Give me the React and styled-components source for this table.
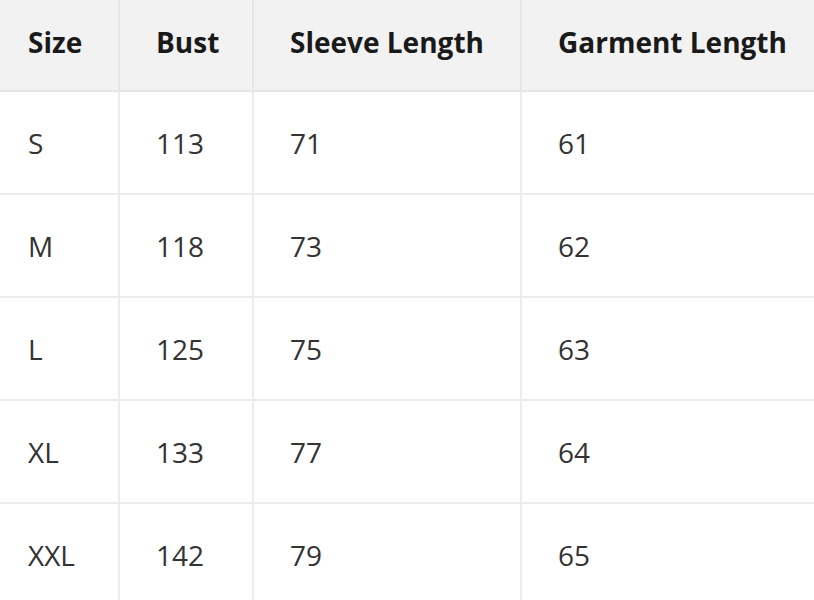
import React from "react";
import styled, { createGlobalStyle } from "styled-components";

const GlobalStyle = createGlobalStyle`
  html, body {
    margin: 0;
    padding: 0;
    background: #ffffff;
    overflow: hidden;
  }
`;

const Wrapper = styled.div`
  width: 814px;
  height: 600px;
  overflow: hidden;
`;

const Table = styled.table`
  border-collapse: collapse;
  table-layout: fixed;
  width: 1000px;
  font-family: "Open Sans", "Noto Sans", sans-serif;
  font-size: 28px;
  color: #333333;
`;

const Col = styled.col`
  width: ${(p) => p.$width}px;
`;

const HeadCell = styled.th`
  height: 84px;
  padding: 0 0 6px ${(p) => (p.$first ? "28px" : "36px")};
  background: #f2f2f2;
  color: #1a1a1a;
  font-weight: 700;
  text-align: left;
  border-right: 2px solid #e6e6e6;
  border-bottom: 2px solid #e6e6e6;
  white-space: nowrap;
`;

const Cell = styled.td`
  height: 101px;
  padding: 0 0 0 ${(p) => (p.$first ? "28px" : "36px")};
  text-align: left;
  border-right: 2px solid #ececec;
  border-bottom: 2px solid #ececec;
  white-space: nowrap;
`;

const widths = [119, 134, 268, 479];
const columns = ["Size", "Bust", "Sleeve Length", "Garment Length"];

const rows = [
  ["S", 113, 71, 61],
  ["M", 118, 73, 62],
  ["L", 125, 75, 63],
  ["XL", 133, 77, 64],
  ["XXL", 142, 79, 65],
];

function App() {
  return (
    <Wrapper>
      <GlobalStyle />
      <Table>
        <colgroup>
          {widths.map((w, i) => (
            <Col key={i} $width={w} />
          ))}
        </colgroup>
        <thead>
          <tr>
            {columns.map((c, i) => (
              <HeadCell key={c} $first={i === 0}>
                {c}
              </HeadCell>
            ))}
          </tr>
        </thead>
        <tbody>
          {rows.map((r) => (
            <tr key={r[0]}>
              {r.map((v, i) => (
                <Cell key={i} $first={i === 0}>
                  {v}
                </Cell>
              ))}
            </tr>
          ))}
        </tbody>
      </Table>
    </Wrapper>
  );
}

export default App;
